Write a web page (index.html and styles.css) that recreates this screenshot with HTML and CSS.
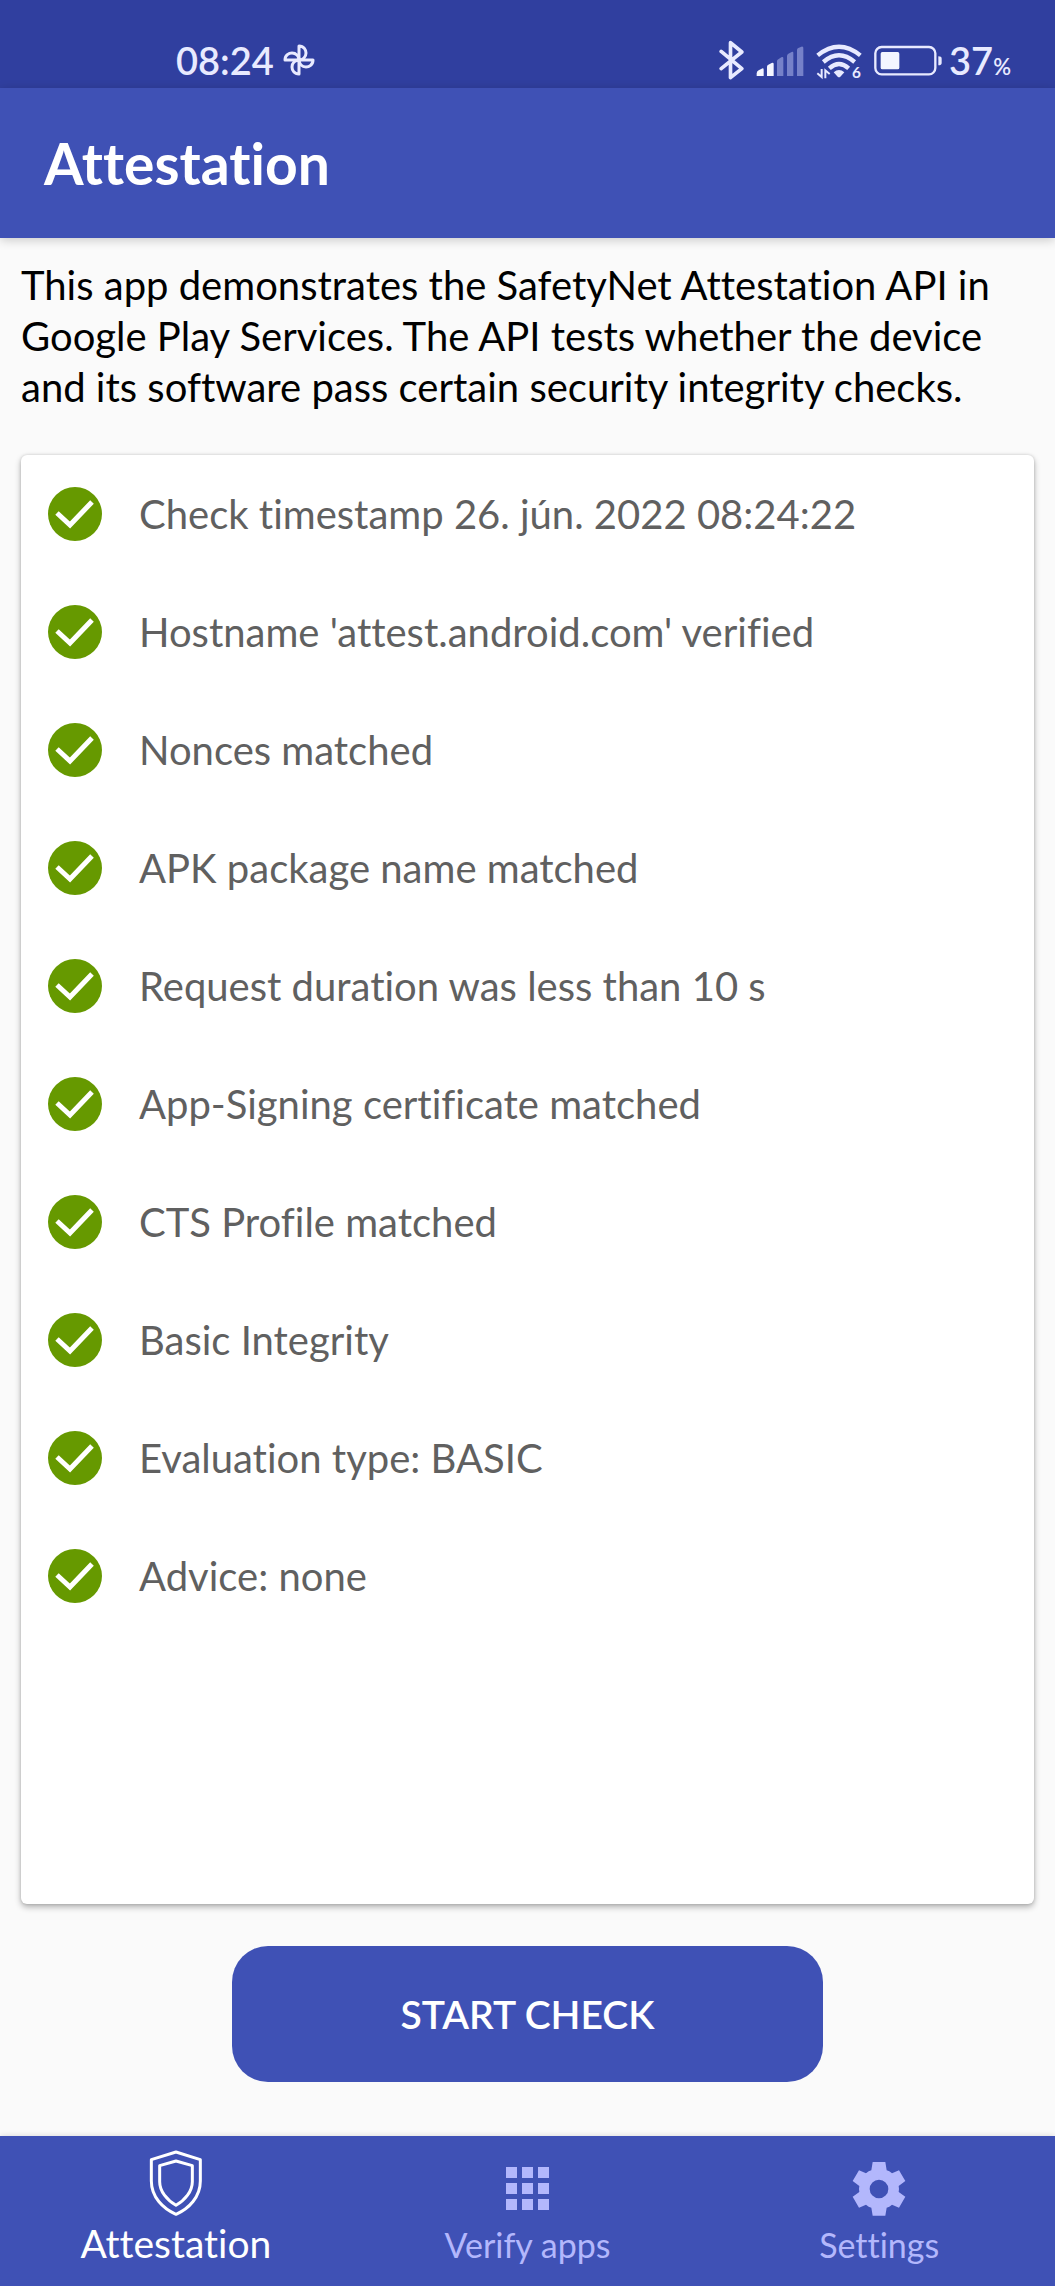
FILE: index.html
```
<!DOCTYPE html>
<html lang="en">
<head>
<meta charset="UTF-8">
<meta name="viewport" content="width=device-width, initial-scale=1.0">
<title>Attestation</title>
<link rel="stylesheet" href="styles.css">
</head>
<body>

<!-- shared icons -->
<svg class="sprite" aria-hidden="true">
  <symbol id="check" viewBox="0 0 54 54">
    <circle cx="27" cy="27" r="27" fill="#669900"/>
    <path d="M9 26 L22 38 L44 15" fill="none" stroke="#fff" stroke-width="5"/>
  </symbol>
</svg>

<div class="status-bar">
  <div class="status-left">
    <span class="time">08:24</span>
    <svg width="34" height="34" viewBox="-17 -17 34 34">
      <g fill="none" stroke="#e8eaff" stroke-width="3" stroke-linejoin="round">
        <path d="M0 0 V-14 C5 -14 7 -10 7 -7 C7 -3 4 0 0 0 Z"/>
        <path transform="rotate(90)" d="M0 0 V-14 C5 -14 7 -10 7 -7 C7 -3 4 0 0 0 Z"/>
        <path transform="rotate(180)" d="M0 0 V-14 C5 -14 7 -10 7 -7 C7 -3 4 0 0 0 Z"/>
        <path transform="rotate(270)" d="M0 0 V-14 C5 -14 7 -10 7 -7 C7 -3 4 0 0 0 Z"/>
      </g>
    </svg>
  </div>
  <div class="status-right">
    <svg width="25" height="40" viewBox="58 60 74 120">
      <path d="M64 94 L126 146 L92 173 V68 L126 96 L64 146" fill="none" stroke="#e8eaff" stroke-width="11" stroke-linecap="round" stroke-linejoin="round"/>
    </svg>
    <svg width="48" height="40" viewBox="170 60 144 120">
      <path d="M172 168 V160 Q172 154 178 151 L187 146 Q193 143 193 149 V168 Z" fill="#f4f5ff"/>
      <path d="M203 168 V140 Q203 136 207 134 L217 129 Q223 127 223 132 V168 Z" fill="#f4f5ff"/>
      <g fill="#7681c9">
        <path d="M233 168 V124 Q233 120 237 118 L246 112 Q252 109 252 115 V168 Z"/>
        <path d="M263 168 V108 Q263 104 267 101 L277 96 Q282 93 282 99 V168 Z"/>
        <path d="M293 168 V90 Q293 86 297 84 L306 80 Q312 78 312 84 V168 Z"/>
      </g>
    </svg>
    <svg width="46" height="40" viewBox="348 60 138 120">
      <g fill="none" stroke="#e8eaff" stroke-width="13">
        <path d="M353 106 Q417 54 481 106"/>
        <path d="M370 126 Q417 86 464 126"/>
        <path d="M388 145 Q417 119 446 145"/>
      </g>
      <path d="M401 157 Q417 143 433 157 L421 170 Q417 173 413 170 Z" fill="#e8eaff"/>
      <path d="M365 147 V171 L352 160 M376 175 V151 L389 162" fill="none" stroke="#e8eaff" stroke-width="6"/>
      <text class="wifi-gen" x="456" y="175">6</text>
    </svg>
    <svg width="69" height="40" viewBox="527 60 207 120">
      <rect x="531" y="81" width="180" height="82" rx="19" fill="none" stroke="#e8eaff" stroke-width="7"/>
      <rect x="547" y="96" width="56" height="52" rx="5" fill="#f4f5ff"/>
      <path d="M720 109 Q730 109 730 116 V129 Q730 136 720 136 Z" fill="#e8eaff"/>
    </svg>
    <span class="battery-level">37<span class="percent">%</span></span>
  </div>
</div>

<header class="app-bar">
  <h1>Attestation</h1>
</header>

<main class="content">
  <p class="intro">This app demonstrates the SafetyNet Attestation API in Google Play Services. The API tests whether the device and its software pass certain security integrity checks.</p>

  <ul class="card">
    <li><svg class="check"><use href="#check"/></svg>Check timestamp 26. jún. 2022 08:24:22</li>
    <li><svg class="check"><use href="#check"/></svg>Hostname 'attest.android.com' verified</li>
    <li><svg class="check"><use href="#check"/></svg>Nonces matched</li>
    <li><svg class="check"><use href="#check"/></svg>APK package name matched</li>
    <li><svg class="check"><use href="#check"/></svg>Request duration was less than 10 s</li>
    <li><svg class="check"><use href="#check"/></svg>App-Signing certificate matched</li>
    <li><svg class="check"><use href="#check"/></svg>CTS Profile matched</li>
    <li><svg class="check"><use href="#check"/></svg>Basic Integrity</li>
    <li><svg class="check"><use href="#check"/></svg>Evaluation type: BASIC</li>
    <li><svg class="check"><use href="#check"/></svg>Advice: none</li>
  </ul>

  <button type="button" class="start-button">START CHECK</button>
</main>

<nav class="tabs">
  <a href="#attestation" class="tab active" aria-current="page">
    <svg width="54" height="66" viewBox="88 61 160 198">
      <g fill="none" stroke="#fff" stroke-width="9" stroke-linejoin="round">
        <path d="M168 67 L241 90 V154 C241 202 207 237 168 254 C129 237 94 202 94 154 V90 Z"/>
        <path d="M168 94 L217 108 V156 C217 185 195 211 168 227 C141 211 119 185 119 156 V108 Z"/>
      </g>
    </svg>
    <span>Attestation</span>
  </a>
  <a href="#verify" class="tab">
    <svg width="54" height="54" viewBox="0 0 54 54" fill="currentColor">
      <path d="M5 5h11v11H5zM21 5h11v11H21zM37 5h11v11H37zM5 21h11v11H5zM21 21h11v11H21zM37 21h11v11H37zM5 37h11v11H5zM21 37h11v11H21zM37 37h11v11H37z"/>
    </svg>
    <span>Verify apps</span>
  </a>
  <a href="#settings" class="tab">
    <svg width="54" height="54" viewBox="97 67 162 162" fill="currentColor">
      <path fill-rule="evenodd" d="M159 67 H197 L201 92 Q209 94 217 101 L238 92 L257 124 L237 139 Q239 148 237 157 L257 171 L238 204 L217 195 Q209 202 201 204 L197 228 H159 L155 204 Q147 202 139 195 L118 204 L99 171 L119 157 Q117 148 119 139 L99 124 L118 92 L139 101 Q147 94 155 92 Z M178 120 A28 28 0 1 0 178 176 A28 28 0 1 0 178 120 Z"/>
    </svg>
    <span>Settings</span>
  </a>
</nav>

</body>
</html>
```
FILE: styles.css
```
* {
  box-sizing: border-box;
}
body {
  font-family: Lato, "Noto Sans", sans-serif;
  font-size: 40px;
  font-variant-ligatures: none;
  background-color: #fafafa;
  color: #000;
  display: flex;
  flex-direction: column;
  min-height: 100vh;
  margin: 0;
}
svg {
  display: block;
  flex: none;
}
.sprite {
  position: absolute;
  width: 0;
  height: 0;
}
.status-bar {
  display: flex;
  justify-content: space-between;
  align-items: flex-end;
  height: 88px;
  padding: 0 44px 5px 176px;
  background-color: #303f9f;
  color: #e8eaff;
  font-size: 38px;
  font-weight: 600;
  line-height: 46px;
}
.status-left,
.status-right {
  display: flex;
  align-items: center;
}
.status-left {
  gap: 8px;
}
.status-right {
  gap: 12px;
}
.battery-level {
  margin-left: -6px;
}
.percent {
  font-size: 22px;
  line-height: 22px;
}
.wifi-gen {
  font-size: 46px;
  font-weight: bold;
  fill: #e8eaff;
}
.app-bar {
  display: flex;
  align-items: center;
  height: 150px;
  padding: 0 44px;
  background-color: #3f51b5;
  box-shadow: 0 2px 10px rgba(0,0,0,0.2);
}
.app-bar h1 {
  margin: 0;
  color: #fff;
  font-size: 57px;
  font-weight: 700;
  line-height: 68px;
}
.content {
  flex: 1;
  display: flex;
  flex-direction: column;
  padding: 22px 21px 54px;
}
.intro {
  margin: 0 0 42px;
  line-height: 51px;
}
.card {
  flex: 1;
  margin: 0 0 42px;
  padding: 0 27px;
  list-style: none;
  background-color: #fff;
  border-radius: 6px;
  box-shadow: 0 3px 6px rgba(0,0,0,0.3), 0 0 3px rgba(0,0,0,0.15);
}
.card li {
  display: flex;
  align-items: center;
  gap: 37px;
  height: 118px;
  color: #606060;
}
.check {
  width: 54px;
  height: 54px;
}
.start-button {
  align-self: center;
  width: 56vw;
  height: 136px;
  border: none;
  border-radius: 36px;
  background-color: #3f51b5;
  color: #fff;
  font-family: inherit;
  font-size: 39px;
  font-weight: 600;
  cursor: pointer;
}
.tabs {
  display: flex;
  height: 150px;
  padding-bottom: 20px;
  background-color: #3f51b5;
  box-shadow: 0 0 6px rgba(0,0,0,0.15);
}
.tab {
  flex: 1;
  display: flex;
  flex-direction: column;
  align-items: center;
  justify-content: flex-end;
  gap: 8px;
  color: #b3b7fc;
  font-size: 34px;
  line-height: 42px;
  text-decoration: none;
}
.tab.active {
  gap: 4px;
  color: #fff;
  font-size: 39px;
  line-height: 46px;
}
```
